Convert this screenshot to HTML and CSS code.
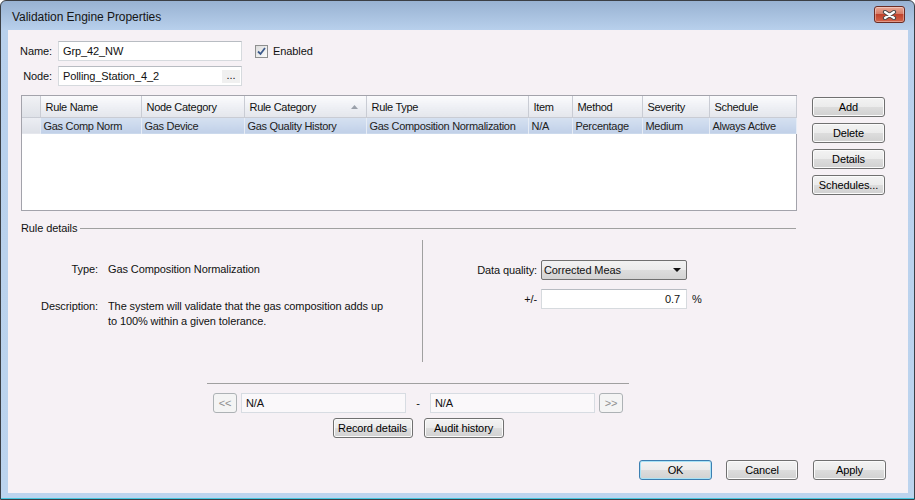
FILE: index.html
```html
<!DOCTYPE html>
<html lang="en">
<head>
    <meta charset="UTF-8">
    <title>Validation Engine Properties</title>
    <link rel="stylesheet" href="styles.css">
</head>
<body>
    <div class="window">
        <div class="titlebar">
            <span class="title">Validation Engine Properties</span>
            <button class="close-btn">
                <svg width="15" height="10" viewBox="0 0 15 10">
                    <path d="M3 2 L12 8 M12 2 L3 8" stroke="#4a4a4a" stroke-width="4.2" stroke-linecap="round"/>
                    <path d="M3 2 L12 8 M12 2 L3 8" stroke="#ffffff" stroke-width="2.2" stroke-linecap="round"/>
                </svg>
            </button>
        </div>

        <div class="content">
            <div class="top-form">
                <div class="form-row">
                    <label class="field-label">Name:</label>
                    <div class="textbox">Grp_42_NW</div>
                    <label class="check">
                        <span class="checkbox">
                            <svg width="9" height="9" viewBox="0 0 9 9">
                                <path d="M1 4.5 L3.5 7 L8 1" fill="none" stroke="#3d5a8c" stroke-width="1.8"/>
                            </svg>
                        </span>
                        Enabled
                    </label>
                </div>
                <div class="form-row">
                    <label class="field-label">Node:</label>
                    <div class="textbox">Polling_Station_4_2<span class="browse">...</span></div>
                </div>
            </div>

            <div class="rules-row">
                <div class="grid">
                    <table class="rules">
                        <colgroup>
                            <col class="c-rh">
                            <col class="c-name">
                            <col class="c-node">
                            <col class="c-cat">
                            <col class="c-type">
                            <col class="c-item">
                            <col class="c-method">
                            <col class="c-sev">
                            <col class="c-sched">
                        </colgroup>
                        <thead>
                            <tr>
                                <th class="rh"></th>
                                <th>Rule Name</th>
                                <th>Node Category</th>
                                <th>Rule Category<svg class="sort" width="7" height="4" viewBox="0 0 7 4"><path d="M0 4 L3.5 0 L7 4 Z" fill="#9aa0aa"/></svg></th>
                                <th>Rule Type</th>
                                <th>Item</th>
                                <th>Method</th>
                                <th>Severity</th>
                                <th>Schedule</th>
                            </tr>
                        </thead>
                        <tbody>
                            <tr class="selected">
                                <td class="rh"></td>
                                <td>Gas Comp Norm</td>
                                <td>Gas Device</td>
                                <td>Gas Quality History</td>
                                <td>Gas Composition Normalization</td>
                                <td>N/A</td>
                                <td>Percentage</td>
                                <td>Medium</td>
                                <td>Always Active</td>
                            </tr>
                        </tbody>
                    </table>
                </div>
                <div class="side-buttons">
                    <button class="btn">Add</button>
                    <button class="btn">Delete</button>
                    <button class="btn">Details</button>
                    <button class="btn">Schedules...</button>
                </div>
            </div>

            <div class="group-header">
                <span>Rule details</span>
                <div class="group-line"></div>
            </div>

            <div class="details">
                <div class="details-left">
                    <div class="detail-row">
                        <span class="detail-label">Type:</span>
                        <span>Gas Composition Normalization</span>
                    </div>
                    <div class="detail-row desc">
                        <span class="detail-label">Description:</span>
                        <span>The system will validate that the gas composition adds up<br>to 100% within a given tolerance.</span>
                    </div>
                </div>
                <div class="details-right">
                    <div class="quality-row">
                        <span class="quality-label">Data quality:</span>
                        <div class="select">
                            <span>Corrected Meas</span>
                            <span class="select-arrow"></span>
                        </div>
                    </div>
                    <div class="quality-row tolerance">
                        <span class="quality-label">+/-</span>
                        <div class="textbox number">0.7</div>
                        <span class="unit">%</span>
                    </div>
                </div>
            </div>

            <div class="nav">
                <div class="nav-sep"></div>
                <div class="nav-row">
                    <button class="btn small disabled">&lt;&lt;</button>
                    <div class="textbox readonly first">N/A</div>
                    <span class="dash">-</span>
                    <div class="textbox readonly">N/A</div>
                    <button class="btn small disabled">&gt;&gt;</button>
                </div>
                <div class="record-row">
                    <button class="btn record">Record details</button>
                    <button class="btn record">Audit history</button>
                </div>
            </div>

            <div class="footer">
                <button class="btn default">OK</button>
                <button class="btn cancel">Cancel</button>
                <button class="btn">Apply</button>
            </div>
        </div>
    </div>
</body>
</html>
```

FILE: styles.css
```css
* {
    box-sizing: border-box;
}

body {
    margin: 0;
    font-family: "Liberation Sans", Arial, sans-serif;
    font-size: 11px;
    letter-spacing: -0.1px;
    color: #111;
    background: #ffffff;
}

.window {
    width: 915px;
    height: 500px;
    border: 1px solid #3b3f45;
    border-radius: 6px 6px 0 0;
    background: linear-gradient(#98b2d2, #b8d0ec 29px, #bcd4ee);
    box-shadow: inset 0 -1px 0 #45c6de;
    display: flex;
    flex-direction: column;
}

.titlebar {
    height: 29px;
    display: flex;
    align-items: center;
    justify-content: space-between;
    padding: 3px 9px 0 11px;
}

.title {
    font-size: 12px;
    letter-spacing: -0.05px;
    color: #151515;
}

.close-btn {
    width: 31px;
    height: 17px;
    margin-top: -5px;
    border: 1px solid #6b2c24;
    border-radius: 3px;
    background: linear-gradient(#e9a795, #d47863 50%, #c0432c 50%, #d3644a);
    box-shadow: inset 0 0 0 1px rgba(255, 255, 255, 0.35);
    display: flex;
    align-items: center;
    justify-content: center;
    padding: 0;
}

.content {
    flex: 1;
    margin: 0 6px 6px 7px;
    background: #f6f1f5;
}

/* name / node */
.top-form {
    padding: 11px 0 0 5px;
    display: flex;
    flex-direction: column;
    gap: 5px;
}

.form-row {
    display: flex;
    align-items: center;
    height: 20px;
}

.field-label {
    width: 39px;
    text-align: right;
    margin-right: 6px;
}

.textbox {
    width: 184px;
    height: 20px;
    background: #ffffff;
    border: 1px solid #d6dade;
    border-top-color: #b8bcc2;
    padding: 0 4px;
    line-height: 18px;
    position: relative;
    white-space: nowrap;
}

.browse {
    position: absolute;
    right: 1px;
    top: 3px;
    width: 18px;
    height: 13px;
    background: #f0f0f0;
    line-height: 10px;
    text-align: center;
}

.check {
    margin-left: 13px;
    display: flex;
    align-items: center;
    gap: 5px;
}

.checkbox {
    width: 13px;
    height: 13px;
    border: 1px solid #8e8f8f;
    background: linear-gradient(135deg, #dcdcdc, #fbfbfb);
    display: flex;
    align-items: center;
    justify-content: center;
}

/* rules grid */
.rules-row {
    display: flex;
    margin: 9px 0 0 13px;
    height: 116px;
}

.grid {
    width: 776px;
    height: 116px;
    border: 1px solid #a3a3ab;
    background: #ffffff;
}

.rules {
    table-layout: fixed;
    border-collapse: collapse;
    width: 774px;
    letter-spacing: -0.3px;
}

.c-rh { width: 18px; }
.c-name { width: 101px; }
.c-node { width: 103px; }
.c-cat { width: 122px; }
.c-type { width: 162px; }
.c-item { width: 44px; }
.c-method { width: 70px; }
.c-sev { width: 67px; }
.c-sched { width: 87px; }

.rules th {
    height: 21px;
    padding: 1px 5px 0;
    text-align: left;
    font-weight: normal;
    white-space: nowrap;
    background: linear-gradient(#fbfbfd, #eceef3 60%, #e4e6ec);
    border-right: 1px solid #c9ccd4;
    border-bottom: 1px solid #c9ccd4;
}

.rules th.rh {
    background: linear-gradient(#f1f2f5, #dfe2e8);
}

.sort {
    float: right;
    margin: 4px 3px 0 0;
}

.rules td {
    height: 17px;
    padding: 0 3px;
    white-space: nowrap;
    overflow: hidden;
    color: #222;
}

.selected td {
    background: linear-gradient(#d6e1f1, #c0d0e8);
    border-right: 1px solid #e6ecf5;
}

.selected td.rh {
    background: linear-gradient(#eceef3, #dde0e7);
}

.side-buttons {
    margin-left: 15px;
    padding-top: 2px;
    display: flex;
    flex-direction: column;
    gap: 6px;
}

.btn {
    width: 73px;
    height: 20px;
    border: 1px solid #707070;
    border-radius: 3px;
    background: linear-gradient(#f3f3f3, #ebebeb 50%, #dddddd 50%, #d1d1d1);
    box-shadow: inset 0 0 0 1px #fbfbfb;
    font: inherit;
    letter-spacing: inherit;
    color: #000;
    padding: 0;
}

/* rule details */
.group-header {
    margin: 10px 0 0 13px;
    width: 775px;
    height: 14px;
    display: flex;
    align-items: center;
}

.group-line {
    flex: 1;
    height: 1px;
    margin-left: 3px;
    background: #a0a0a0;
}

.details {
    display: flex;
    height: 122px;
    margin-top: 5px;
}

.details-left {
    width: 414px;
    padding-top: 22px;
}

.detail-row {
    display: flex;
    line-height: 15px;
}

.detail-row.desc {
    margin-top: 22px;
}

.detail-label {
    width: 77px;
    margin: 0 10px 0 13px;
    text-align: right;
    flex-shrink: 0;
}

.details-right {
    border-left: 1px solid #a0a0a0;
    padding-top: 20px;
}

.quality-row {
    display: flex;
    align-items: center;
    height: 20px;
}

.quality-row.tolerance {
    margin-top: 9px;
}

.quality-label {
    width: 114px;
    text-align: right;
    margin-right: 4px;
}

.select {
    width: 146px;
    height: 20px;
    border: 1px solid #707070;
    border-radius: 2px;
    background: linear-gradient(#f2f2f2, #ebebeb 50%, #dddddd 50%, #d3d3d3);
    padding: 0 5px 0 2px;
    display: flex;
    align-items: center;
    justify-content: space-between;
}

.select-arrow {
    width: 0;
    height: 0;
    border-left: 4px solid transparent;
    border-right: 4px solid transparent;
    border-top: 4px solid #111;
}

.textbox.number {
    width: 146px;
    text-align: right;
    padding-right: 6px;
}

.unit {
    margin-left: 5px;
}

/* record navigation */
.nav {
    width: 422px;
    margin: 21px 0 0 199px;
}

.nav-sep {
    height: 1px;
    background: #a0a0a0;
}

.nav-row {
    display: flex;
    align-items: center;
    margin-top: 9px;
    padding-left: 6px;
}

.btn.small {
    width: 24px;
}

.btn.disabled {
    border-color: #adb2b5;
    background: #f4f4f4;
    box-shadow: none;
    color: #8f8f8f;
}

.textbox.readonly {
    width: 165px;
    background: #faf8fa;
    border-color: #d7dce2;
}

.textbox.first {
    margin-left: 4px;
}

.dash {
    width: 24px;
    text-align: center;
}

.textbox.readonly + .btn {
    margin-left: 4px;
}

.record-row {
    display: flex;
    justify-content: center;
    gap: 11px;
    margin-top: 5px;
}

.btn.record {
    width: 80px;
}

.footer {
    display: flex;
    justify-content: flex-end;
    margin-top: 22px;
    padding-right: 22px;
}

.btn.default {
    border-color: #3c7fb1;
    box-shadow: inset 0 0 0 1px #a8e2f6;
}

.btn.cancel {
    width: 72px;
    margin: 0 15px 0 14px;
}
```
